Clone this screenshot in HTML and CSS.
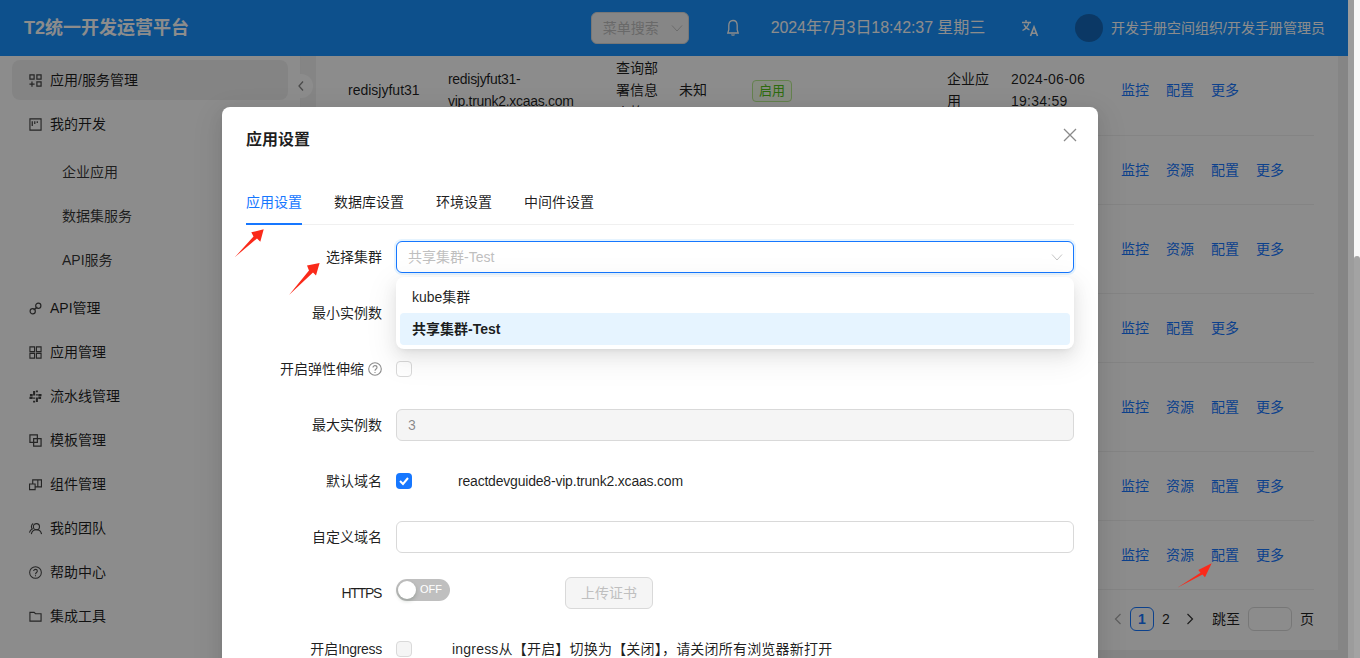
FILE: index.html
```html
<!DOCTYPE html>
<html lang="zh">
<head>
<meta charset="utf-8">
<title>应用设置</title>
<link rel="stylesheet" href="styles.css">
</head>
<body>
<div class="page">
  <header class="topbar">
    <div class="brand">T2统一开发运营平台</div>
    <div class="top-right">
      <div class="menu-search">菜单搜索<svg class="chev" viewBox="0 0 12 12" width="12" height="12"><path d="M1 3.500 6 9l5-5.500" fill="none" stroke="currentColor" stroke-width="1"/></svg></div>
      <svg class="bell" viewBox="0 0 16 18" width="16" height="18"><path d="M8 1.500c-3 0-4.200 2.300-4.200 5v4.200L2.800 14h10.400l-1-3.300V6.500c0-2.700-1.200-5-4.200-5zM6.500 15.500c.3.900 2.700.900 3 0" fill="none" stroke="currentColor" stroke-width="1.300"/></svg>
      <div class="clock">2024年7月3日18:42:37 星期三</div>
      <svg class="lang" viewBox="0 0 18 18" width="18" height="18"><path d="M1 3.500h9M5 1v2.500M8 3.500C7 7.500 4.500 10 1.500 11.500M3 5.500c1 2.500 3 4.300 5.500 5.300" fill="none" stroke="currentColor" stroke-width="1.300"/><path d="M9.500 17 13 8l3.500 9M10.700 14.200h4.600" fill="none" stroke="currentColor" stroke-width="1.600"/></svg>
      <div class="avatar"></div>
      <div class="user">开发手册空间组织/开发手册管理员</div>
    </div>
  </header>
  <div class="body-row">
    <aside class="sidebar">
      <div class="nav-item active"><svg class="ico" viewBox="0 0 14 14"><path d="M1 1h4.500v4.500H1zM8.500 1H13v4.500H8.500zM8.500 8.500H13V13H8.500zM3.200 8v5.600M.5 10.800h5.500" fill="none" stroke="currentColor" stroke-width="1.300"/></svg>应用/服务管理</div>
      <div class="nav-item"><svg class="ico" viewBox="0 0 14 14"><path d="M1 1h12v12H1z" fill="none" stroke="currentColor" stroke-width="1.200"/><path d="M3.500 3.500v5M6.200 3.500v3M8.900 3.500v2" stroke="currentColor" stroke-width="1.300"/></svg>我的开发</div>
      <div class="sub-group">
        <div class="sub-item">企业应用</div>
        <div class="sub-item">数据集服务</div>
        <div class="sub-item">API服务</div>
      </div>
      <div class="nav-item"><svg class="ico" viewBox="0 0 14 14"><circle cx="4" cy="10" r="2.800" fill="none" stroke="currentColor" stroke-width="1.300"/><circle cx="10" cy="4" r="2.800" fill="none" stroke="currentColor" stroke-width="1.300"/><path d="M5 8.500 9 5.500" stroke="currentColor" stroke-width="1.300"/></svg>API管理</div>
      <div class="nav-item"><svg class="ico" viewBox="0 0 14 14"><path d="M1 1h5v5H1zM8 1h5v5H8zM1 8h5v5H1zM8 8h5v5H8z" fill="none" stroke="currentColor" stroke-width="1.200"/></svg>应用管理</div>
      <div class="nav-item"><svg class="ico" viewBox="0 0 14 14"><path d="M5.500 1v5M8.500 .5v2M8.500 4.500v1.500M1 5.500h3M10 5.500h3.500M8.500 8v5M5.500 11.500v2M5.500 8v1.500M.5 8.500h3.500M10 8.500h3" fill="none" stroke="currentColor" stroke-width="2.200"/></svg>流水线管理</div>
      <div class="nav-item"><svg class="ico" viewBox="0 0 14 14"><path d="M1 1h8v8H1zM5 5h8v8H5z" fill="none" stroke="currentColor" stroke-width="1.300"/></svg>模板管理</div>
      <div class="nav-item"><svg class="ico" viewBox="0 0 14 14"><path d="M.6 6.500h6v6h-6zM6.600 12.500V9.500h3M4 6.500V2h5.500v7.500H13.400V2H9.500" fill="none" stroke="currentColor" stroke-width="1.200"/></svg>组件管理</div>
      <div class="nav-item"><svg class="ico" viewBox="0 0 14 14"><circle cx="8" cy="5" r="3.300" fill="none" stroke="currentColor" stroke-width="1.200"/><path d="M2.500 13c.5-3 2.500-4.700 5.500-4.700s5 1.700 5.500 4.700M4.500 1.500C2.500 2.500 2 6 3.500 7.500 1.500 8.500.8 10 .5 11.500" fill="none" stroke="currentColor" stroke-width="1.200"/></svg>我的团队</div>
      <div class="nav-item"><svg class="ico" viewBox="0 0 14 14"><circle cx="7" cy="7" r="6.300" fill="none" stroke="currentColor" stroke-width="1.100"/><path d="M5 5.500C5 3 9 3 9 5.500 9 7 7 7 7 8.800M7 10v1" fill="none" stroke="currentColor" stroke-width="1.100"/></svg>帮助中心</div>
      <div class="nav-item"><svg class="ico" viewBox="0 0 14 14"><path d="M1 2.500h4.500L7 4h6v8H1z" fill="none" stroke="currentColor" stroke-width="1.200"/></svg>集成工具</div>
    </aside>
    <main class="content">
      <div class="panel">
        <div class="row row-first">
          <div class="c c-name">redisjyfut31</div>
          <div class="c c-domain">redisjyfut31-<br>vip.trunk2.xcaas.com</div>
          <div class="c c-desc">查询部<br>署信息<br>火焰</div>
          <div class="c c-state">未知</div>
          <div class="c c-tag"><span class="tag">启用</span></div>
          <div class="c c-type">企业应<br>用</div>
          <div class="c c-date">2024-06-06<br>19:34:59</div>
          <div class="c c-act"><a>监控</a><a>配置</a><a>更多</a></div>
        </div>
        <div class="row r69"><div class="c-spacer"></div><div class="c c-act"><a>监控</a><a>资源</a><a>配置</a><a>更多</a></div></div>
        <div class="row r89"><div class="c-spacer"></div><div class="c c-act"><a>监控</a><a>资源</a><a>配置</a><a>更多</a></div></div>
        <div class="row r69"><div class="c-spacer"></div><div class="c c-act"><a>监控</a><a>配置</a><a>更多</a></div></div>
        <div class="row r89"><div class="c-spacer"></div><div class="c c-act"><a>监控</a><a>资源</a><a>配置</a><a>更多</a></div></div>
        <div class="row r69"><div class="c-spacer"></div><div class="c c-act"><a>监控</a><a>资源</a><a>配置</a><a>更多</a></div></div>
        <div class="row r69"><div class="c-spacer"></div><div class="c c-act"><a>监控</a><a>资源</a><a>配置</a><a>更多</a></div></div>
        <div class="pager">
          <span class="pg-arrow dim"><svg viewBox="0 0 10 12" width="10" height="12"><path d="M7.500 1 2.500 6l5 5" fill="none" stroke="currentColor" stroke-width="1.200"/></svg></span>
          <span class="pg-cur">1</span>
          <span class="pg-num">2</span>
          <span class="pg-arrow"><svg viewBox="0 0 10 12" width="10" height="12"><path d="m2.500 1 5 5-5 5" fill="none" stroke="currentColor" stroke-width="1.200"/></svg></span>
          <span class="pg-jump">跳至</span>
          <span class="pg-input"></span>
          <span class="pg-page">页</span>
        </div>
      </div>
    </main>
  </div>
  <div class="rail"><div class="rail-edge"></div><div class="rail-track"><div class="rail-thumb"></div></div></div>
  <div class="collapse"><svg viewBox="0 0 8 12" width="8" height="12"><path d="M6 1.500 2 6l4 4.500" fill="none" stroke="currentColor" stroke-width="1.300"/></svg></div>
  <div class="mask"></div>
  <section class="modal">
    <div class="modal-head">
      <div class="modal-title">应用设置</div>
      <svg class="close" viewBox="0 0 14 14" width="14" height="14"><path d="m1 1 12 12M13 1 1 13" stroke="currentColor" stroke-width="1.300"/></svg>
    </div>
    <nav class="tabs">
      <span class="tab on">应用设置</span>
      <span class="tab">数据库设置</span>
      <span class="tab">环境设置</span>
      <span class="tab">中间件设置</span>
    </nav>
    <form class="form">
      <div class="f-row">
        <label class="f-label">选择集群</label>
        <div class="select focus"><span class="ph">共享集群-Test</span><svg viewBox="0 0 12 12" width="12" height="12"><path d="M1 3.500 6 9l5-5.500" fill="none" stroke="currentColor" stroke-width="1"/></svg></div>
        <div class="dropdown">
          <div class="opt">kube集群</div>
          <div class="opt sel">共享集群-Test</div>
        </div>
      </div>
      <div class="f-row">
        <label class="f-label">最小实例数</label>
        <div class="input"></div>
      </div>
      <div class="f-row">
        <label class="f-label">开启弹性伸缩<svg class="help" viewBox="0 0 14 14" width="14" height="14"><circle cx="7" cy="7" r="6.300" fill="none" stroke="currentColor" stroke-width="1.100"/><path d="M5 5.500C5 3 9 3 9 5.500 9 7 7 7 7 8.800M7 10v1" fill="none" stroke="currentColor" stroke-width="1.100"/></svg></label>
        <span class="check"></span>
      </div>
      <div class="f-row">
        <label class="f-label">最大实例数</label>
        <div class="input disabled">3</div>
      </div>
      <div class="f-row">
        <label class="f-label">默认域名</label>
        <span class="check on"><svg viewBox="0 0 16 16" width="16" height="16"><path d="m4 8 3 3 5-6" fill="none" stroke="#fff" stroke-width="2"/></svg></span>
        <span class="f-text t-domain">reactdevguide8-vip.trunk2.xcaas.com</span>
      </div>
      <div class="f-row">
        <label class="f-label">自定义域名</label>
        <div class="input"></div>
      </div>
      <div class="f-row">
        <label class="f-label"><span class="https">HTTPS</span></label>
        <span class="switch"><i class="knob"></i><span class="sw-text">OFF</span></span>
        <span class="btn-off">上传证书</span>
      </div>
      <div class="f-row">
        <label class="f-label">开启<span class="ingress">Ingress</span></label>
        <span class="check dis"></span>
        <span class="f-text t-ingress">ingress从【开启】切换为【关闭】，请关闭所有浏览器新打开</span>
      </div>
    </form>
  </section>
  <svg class="arrows" viewBox="0 0 1360 658" width="1360" height="658">
    <path d="M235 257 253.500 236.500 251.300 232.300 263.700 229.300 260.300 241.700 257 238.500z"/>
    <path d="M289 295 309 270.500 307 265.600 319.600 263 316 275.600 313 272.500z"/>
    <path d="M1177.300 587.700 1200.500 572.800 1198.300 570 1211.700 563.300 1205 577.300 1202.500 574.500z"/>
  </svg>
</div>
</body>
</html>
```

FILE: styles.css
```css
* { box-sizing: border-box; }
html, body { margin: 0; padding: 0; height: 100%; overflow: hidden; }
body { font-family: "Liberation Sans", "Noto Sans CJK SC", sans-serif; font-size: 14px; line-height: 22px; color: rgba(0,0,0,.88); }
.page { position: relative; width: 1360px; height: 658px; overflow: hidden; background: #f3f3f3; }

.topbar { height: 56px; margin-right: 12px; background: #1893ff; color: #fff; display: flex; align-items: center; justify-content: space-between; padding: 0 23px 0 24px; }
.brand { font-size: 18px; font-weight: 700; line-height: 24px; }
.top-right { display: flex; align-items: center; }
.menu-search { width: 98px; height: 32px; border-radius: 6px; background: #f5f5f5; border: 1px solid #d9d9d9; color: #bfbfbf; display: flex; align-items: center; justify-content: space-between; padding: 0 5px 0 11px; }
.menu-search .chev { color: #c4c4c4; }
.bell { margin-left: 36px; }
.clock { margin-left: 30px; font-size: 16px; letter-spacing: -.08px; color: #fff; white-space: nowrap; }
.lang { margin-left: 36px; }
.avatar { width: 28px; height: 28px; border-radius: 50%; background: #1467b8; margin-left: 36px; }
.user { margin-left: 8px; white-space: nowrap; }

.body-row { display: flex; height: 602px; margin-right: 12px; }
.sidebar { width: 301px; background: #fff; border-right: 1px solid #f0f0f0; padding: 4px 12px 0; flex: none; }
.nav-item { height: 40px; margin-bottom: 4px; padding-left: 17px; display: flex; align-items: center; gap: 8px; border-radius: 8px; color: rgba(0,0,0,.88); }
.nav-item.active { background: rgba(0,0,0,.06); }
.ico { width: 13px; height: 13px; flex: none; color: #444; }
.sub-group { padding: 4px 0; }
.sub-item { height: 40px; margin-bottom: 4px; padding-left: 50px; display: flex; align-items: center; color: rgba(0,0,0,.8); }

.content { flex: 1; padding: 0 10px 8px 15px; min-width: 0; }
.panel { background: #fff; height: 594px; padding-right: 24px; display: flex; flex-direction: column; }
.row { display: flex; align-items: center; border-bottom: 1px solid #f0f0f0; flex: none; position: relative; }
.row-first { height: 80px; overflow: hidden; padding: 0 0 11px 32px; }
.r69 { height: 69px; }
.r89 { height: 89px; }
.c-spacer { width: 805px; flex: none; }
.c { line-height: 22px; flex: none; }
.c-name { width: 100px; }
.c-domain { width: 168px; letter-spacing: -.3px; }
.c-desc { width: 63px; }
.c-state { width: 73px; }
.c-tag { width: 195px; }
.c-type { width: 64px; }
.c-date { width: 110px; letter-spacing: .25px; }
.c-act { display: flex; gap: 17px; }
.c-act a { color: #1677ff; text-decoration: none; }
.tag { display: inline-block; height: 22px; line-height: 20px; padding: 0 6px; font-size: 13px; color: #52c41a; background: #f6ffed; border: 1px solid #b7eb8f; border-radius: 4px; vertical-align: middle; }
.pager { height: 60px; padding-bottom: 3px; display: flex; align-items: center; justify-content: flex-end; }
.pg-arrow { width: 24px; display: flex; justify-content: center; color: #333; }
.pg-arrow.dim { color: #aaa; }
.pg-cur { width: 24px; height: 24px; border: 1px solid #1677ff; border-radius: 6px; color: #1677ff; font-weight: 700; display: flex; align-items: center; justify-content: center; }
.pg-num { width: 24px; text-align: center; }
.pg-jump { margin-left: 10px; }
.pg-input { width: 44px; height: 24px; border: 1px solid #d9d9d9; border-radius: 6px; margin: 0 8px; background: #fff; }

.rail { position: absolute; right: 0; top: 0; bottom: 0; width: 12px; display: flex; z-index: 30; }
.rail-edge { width: 6px; background: #9c9c9c; }
.rail-track { width: 6px; background: #f8f8f8; position: relative; }
.rail-thumb { position: absolute; left: 0; right: 0; top: 256px; bottom: 0; background: #a3a3a3; border-radius: 3px 3px 0 0; }
.collapse { position: absolute; left: 289px; top: 74px; width: 24px; height: 24px; border-radius: 50%; background: #fff; color: #888; display: flex; align-items: center; justify-content: center; }

.mask { position: absolute; left: 0; top: 0; bottom: 0; right: 12px; background: rgba(0,0,0,.45); z-index: 10; }
.modal { position: absolute; left: 222px; top: 107px; width: 876px; height: 640px; background: #fff; border-radius: 8px; padding: 21px 24px 20px; z-index: 20; box-shadow: 0 6px 16px 0 rgba(0,0,0,.08), 0 3px 6px -4px rgba(0,0,0,.12), 0 9px 28px 8px rgba(0,0,0,.05); }
.modal-head { height: 24px; display: flex; align-items: center; justify-content: space-between; }
.modal-title { font-size: 16px; font-weight: 700; line-height: 24px; }
.close { color: #8a8a8a; margin-right: -3px; margin-top: -10px; }
.tabs { height: 54px; margin-top: 19px; border-bottom: 1px solid #f0f0f0; display: flex; gap: 32px; align-items: flex-end; }
.tab { height: 44px; line-height: 44px; color: rgba(0,0,0,.88); position: relative; }
.tab.on { color: #1677ff; }
.tab.on::after { content: ""; position: absolute; left: 0; right: 0; bottom: -1px; height: 2px; background: #1677ff; }
.form { padding-top: 16px; }
.f-row { display: flex; align-items: center; height: 32px; margin-bottom: 24px; position: relative; }
.f-label { width: 136px; margin-right: 14px; text-align: right; display: flex; align-items: center; justify-content: flex-end; flex: none; }
.https { letter-spacing: -1.300px; margin-right: 1px; }
.ingress { letter-spacing: -.3px; }
.help { margin-left: 4px; color: #8c8c8c; }
.select, .input { flex: 1; height: 32px; border: 1px solid #d9d9d9; border-radius: 6px; padding: 0 11px; display: flex; align-items: center; justify-content: space-between; background: #fff; }
.select.focus { border-color: #1677ff; box-shadow: 0 0 0 2px rgba(5,145,255,.1); }
.select svg { color: #c4c4c4; margin-right: -1px; }
.ph { color: #bfbfbf; }
.input.disabled { background: #f5f5f5; color: rgba(0,0,0,.45); }
.dropdown { position: absolute; left: 150px; top: 36px; right: 0; height: 72px; background: #fff; border-radius: 8px; padding: 4px; box-shadow: 0 6px 16px 0 rgba(0,0,0,.08), 0 3px 6px -4px rgba(0,0,0,.12), 0 9px 28px 8px rgba(0,0,0,.05); z-index: 5; }
.opt { height: 32px; line-height: 32px; padding: 0 12px; border-radius: 4px; }
.opt.sel { background: #e6f4ff; font-weight: 700; }
.check { width: 16px; height: 16px; border: 1px solid #d9d9d9; border-radius: 4px; background: #fff; display: block; flex: none; }
.check.on { background: #1677ff; border: 0; }
.check.on svg { display: block; }
.check.dis { background: #f5f5f5; }
.f-text { white-space: nowrap; }
.t-domain { margin-left: 46px; letter-spacing: -.2px; }
.t-ingress { margin-left: 40px; letter-spacing: .2px; }
.switch { width: 54px; height: 22px; border-radius: 11px; background: #bfbfbf; position: relative; display: block; flex: none; margin-top: -6px; }
.knob { position: absolute; left: 2px; top: 2px; width: 18px; height: 18px; border-radius: 50%; background: #fff; box-shadow: 0 2px 4px rgba(0,35,11,.2); }
.sw-text { position: absolute; left: 24px; top: 0; line-height: 21px; font-size: 11px; color: #fff; }
.btn-off { margin-left: 115px; width: 88px; height: 32px; border: 1px solid #d9d9d9; border-radius: 6px; background: #f5f5f5; color: #bfbfbf; display: flex; align-items: center; justify-content: center; }
.arrows { position: absolute; left: 0; top: 0; z-index: 40; pointer-events: none; }
.arrows path { fill: #fa2a1a; }
```
